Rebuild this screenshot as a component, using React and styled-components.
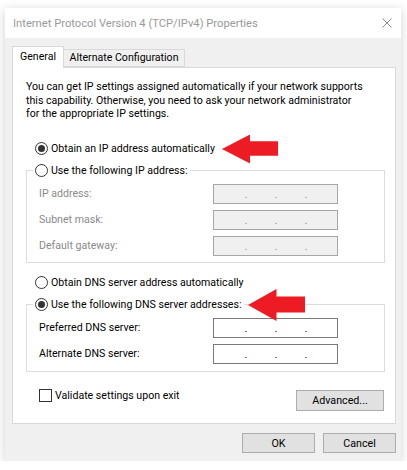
import React from 'react'
import styled, { createGlobalStyle } from 'styled-components'

const GlobalStyle = createGlobalStyle`
   body {
      margin: 0;
      background: #ffffff;
      font-family: Roboto, 'Noto Sans', 'Liberation Sans', sans-serif;
   }
`

const Page = styled.div`
   padding: 8px 0 0 5px;
`

const Window = styled.div`
   width: 396px;
   height: 453px;
   display: flex;
   flex-direction: column;
   box-shadow: 0 2px 10px rgba(0, 0, 0, 0.18);
`

const TitleBar = styled.div`
   height: 30px;
   flex: none;
   background: #ffffff;
   display: flex;
   align-items: center;
   justify-content: space-between;
   padding: 0 8px 0 8px;
   font-size: 11.2px;
   color: #9a9a9a;
`

const CloseIcon = styled.svg`
   width: 10px;
   height: 10px;
   margin-right: 1px;
`

const Body = styled.div`
   flex: 1;
   background: #f0f0f0;
   padding: 8px 5px 8px 7px;
   display: flex;
   flex-direction: column;
   font-size: 10.6px;
`

const Tabs = styled.div`
   display: flex;
   align-items: flex-end;
   height: 21px;
`

const Tab = styled.div`
   box-sizing: border-box;
   width: ${p => p.w}px;
   height: ${p => (p.active ? '22px' : '18px')};
   margin-bottom: ${p => (p.active ? '-1px' : '0')};
   padding-top: ${p => (p.active ? '3px' : '1px')};
   text-align: center;
   white-space: nowrap;
   background: ${p => (p.active ? '#ffffff' : '#f0f0f0')};
   border: 1px solid #d9d9d9;
   border-bottom: ${p => (p.active ? 'none' : '1px solid #d9d9d9')};
   border-left: ${p => (p.after ? 'none' : '1px solid #d9d9d9')};
   color: #000;
   position: relative;
   z-index: ${p => (p.active ? 1 : 0)};
`

const Panel = styled.div`
   box-sizing: border-box;
   height: 357px;
   background: #ffffff;
   border: 1px solid #d9d9d9;
   padding: 12px 10px 0 13px;
   color: #000;
`

const Description = styled.p`
   margin: 0;
   line-height: 13.5px;
   white-space: nowrap;
`

const RadioRow = styled.label`
   display: flex;
   align-items: center;
   height: 14px;
   margin-top: ${p => p.top || 0}px;
   margin-left: 9px;
`

const RadioCircle = styled.span`
   box-sizing: border-box;
   width: 13px;
   height: 13px;
   border-radius: 50%;
   border: 1px solid #333333;
   background: #ffffff;
   display: flex;
   align-items: center;
   justify-content: center;
   margin-right: 3px;
   flex: none;
   &::after {
      content: '';
      width: 7px;
      height: 7px;
      border-radius: 50%;
      background: ${p => (p.checked ? '#333333' : 'transparent')};
   }
`

const LabelText = styled.span`
   position: relative;
   white-space: nowrap;
`

const Arrow = styled.svg`
   position: absolute;
   left: calc(100% + ${p => p.gap}px);
   top: 50%;
   transform: translateY(-50%);
   width: ${p => p.w}px;
   height: ${p => p.h}px;
`

const Group = styled.fieldset`
   margin: ${p => p.top || 0}px 0 0 0;
   padding: 6px 0 ${p => p.bottom}px 12px;
   border: 1px solid #dcdcdc;
   min-width: 0;
   display: flex;
   flex-direction: column;
   gap: 6px;
`

const Legend = styled.legend`
   padding: 0 2px;
   margin-left: -6px;
   height: 14px;
   display: flex;
   align-items: center;
`

const LegendRadio = styled.span`
   display: flex;
   align-items: center;
`

const FieldRow = styled.div`
   display: flex;
   align-items: center;
   height: 20px;
`

const FieldLabel = styled.span`
   width: 174px;
   color: ${p => (p.disabled ? '#8a8a8a' : '#000000')};
`

const IpBox = styled.div`
   box-sizing: border-box;
   width: 125px;
   height: 20px;
   border: 1px solid ${p => (p.disabled ? '#a6a6a6' : '#7a7a7a')};
   background: ${p => (p.disabled ? '#f0f0f0' : '#ffffff')};
   display: flex;
   padding-left: 17px;
   color: ${p => (p.disabled ? '#8a8a8a' : '#000000')};
`

const IpDot = styled.span`
   width: 30px;
   text-align: center;
   line-height: 20px;
   font-size: 11px;
`

const BottomRow = styled.div`
   display: flex;
   justify-content: space-between;
   align-items: flex-start;
   margin-top: 17px;
   padding-left: 13px;
   margin-right: 1px;
`

const CheckRow = styled.label`
   display: flex;
   align-items: center;
   height: 13px;
`

const CheckBox = styled.span`
   box-sizing: border-box;
   width: 13px;
   height: 13px;
   border: 1px solid #333333;
   background: #ffffff;
   margin-right: 3px;
`

const Button = styled.button`
   box-sizing: border-box;
   width: ${p => p.w || 73}px;
   height: ${p => p.h || 20}px;
   margin-top: ${p => p.top || 0}px;
   background: #e1e1e1;
   border: 1px solid #adadad;
   font-family: inherit;
   font-size: 10.7px;
   color: #000;
   padding: 0;
`

const Footer = styled.div`
   display: flex;
   justify-content: flex-end;
   gap: 8px;
   margin-top: 9px;
`

const ArrowShape = ({ w, h, gap }) => (
   <Arrow w={w} h={h} gap={gap} viewBox='0 0 56 30' preserveAspectRatio='none'>
      <polygon points='0,15 28,0 28,7 56,7 56,22 28,22 28,30' fill='#ed1c24' />
   </Arrow>
)

const IpField = ({ disabled }) => (
   <IpBox disabled={disabled}>
      <IpDot>.</IpDot>
      <IpDot>.</IpDot>
      <IpDot>.</IpDot>
   </IpBox>
)

const App = () => {
   return (
      <>
         <GlobalStyle />
         <Page>
            <Window>
               <TitleBar>
                  <span>Internet Protocol Version 4 (TCP/IPv4) Properties</span>
                  <CloseIcon viewBox='0 0 10 10'>
                     <path d='M0.5 0.5 L9.5 9.5 M9.5 0.5 L0.5 9.5' stroke='#8a8a8a' strokeWidth='1' />
                  </CloseIcon>
               </TitleBar>
               <Body>
                  <Tabs>
                     <Tab active w={52}>General</Tab>
                     <Tab after w={121}>Alternate Configuration</Tab>
                  </Tabs>
                  <Panel>
                     <Description>
                        You can get IP settings assigned automatically if your network supports
                        <br />
                        this capability. Otherwise, you need to ask your network administrator
                        <br />
                        for the appropriate IP settings.
                     </Description>
                     <RadioRow top={21}>
                        <RadioCircle checked />
                        <LabelText>
                           Obtain an IP address automatically
                           <ArrowShape w={56} h={29} gap={7} />
                        </LabelText>
                     </RadioRow>
                     <Group top={8} bottom={6}>
                        <Legend>
                           <LegendRadio>
                              <RadioCircle />
                              <LabelText>Use the following IP address:</LabelText>
                           </LegendRadio>
                        </Legend>
                        <FieldRow>
                           <FieldLabel disabled>IP address:</FieldLabel>
                           <IpField disabled />
                        </FieldRow>
                        <FieldRow>
                           <FieldLabel disabled>Subnet mask:</FieldLabel>
                           <IpField disabled />
                        </FieldRow>
                        <FieldRow>
                           <FieldLabel disabled>Default gateway:</FieldLabel>
                           <IpField disabled />
                        </FieldRow>
                     </Group>
                     <RadioRow top={13}>
                        <RadioCircle />
                        <LabelText>Obtain DNS server address automatically</LabelText>
                     </RadioRow>
                     <Group top={8} bottom={7}>
                        <Legend>
                           <LegendRadio>
                              <RadioCircle checked />
                              <LabelText>
                                 Use the following DNS server addresses:
                                 <ArrowShape w={57} h={32} gap={6} />
                              </LabelText>
                           </LegendRadio>
                        </Legend>
                        <FieldRow>
                           <FieldLabel>Preferred DNS server:</FieldLabel>
                           <IpField />
                        </FieldRow>
                        <FieldRow>
                           <FieldLabel>Alternate DNS server:</FieldLabel>
                           <IpField />
                        </FieldRow>
                     </Group>
                     <BottomRow>
                        <CheckRow>
                           <CheckBox />
                           Validate settings upon exit
                        </CheckRow>
                        <Button w={88} h={21} top={1}>Advanced...</Button>
                     </BottomRow>
                  </Panel>
                  <Footer>
                     <Button>OK</Button>
                     <Button>Cancel</Button>
                  </Footer>
               </Body>
            </Window>
         </Page>
      </>
   )
}

export default App
